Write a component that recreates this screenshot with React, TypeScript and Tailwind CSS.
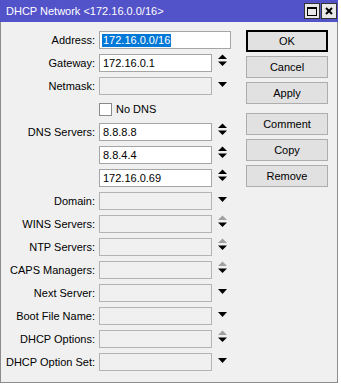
import React from "react";

type Kind = "spin" | "spinOff" | "drop" | "none";

const Arrow = ({ kind }: { kind: Kind }) => {
  if (kind === "none") return <div className="w-[9px]" />;
  if (kind === "drop")
    return (
      <svg width="9" height="18" viewBox="0 0 9 18" className="shrink-0">
        <polygon points="0,5 9,5 4.5,10" fill="#000" />
      </svg>
    );
  return (
    <svg width="9" height="18" viewBox="0 0 9 18" className="shrink-0">
      <polygon points="0,5 4.5,0.5 9,5" fill={kind === "spinOff" ? "#a0a0a0" : "#000"} />
      <polygon points="0,7.5 9,7.5 4.5,12" fill="#000" />
    </svg>
  );
};

const Field = ({ label, value, kind }: { label: string; value?: string; kind: Kind }) => {
  const disabled = value === undefined;
  return (
    <div className="flex items-center h-[18px]">
      <div className="w-[95px] text-right pr-[1px] leading-none">{label ? label + ":" : ""}</div>
      <div
        className={
          "ml-[3px] w-[113px] h-[18px] border flex items-center px-[3px] leading-none " +
          (disabled ? "bg-[#f0f0f0] border-[#b4b4b4]" : "bg-white border-[#a5a5a5]")
        }
      >
        {value}
      </div>
      <div className="ml-[6px]">
        <Arrow kind={kind} />
      </div>
    </div>
  );
};

const Btn = ({ label, focused }: { label: string; focused?: boolean }) => (
  <div
    className={
      "w-[82px] h-[22px] flex items-center justify-center bg-[#e1e1e1] leading-none " +
      (focused ? "border-2 border-black" : "border border-[#adadad]")
    }
  >
    {label}
  </div>
);

export default function App() {
  return (
    <div className="w-[341px] h-[384px] bg-white" style={{ fontFamily: '"Liberation Sans", Arial, sans-serif' }}>
      <div className="w-[338px] h-[383px] bg-[#f0f0f0] border border-[#8c8c8c] border-t-0 text-[11px] text-black flex flex-col">
        <div className="h-[22px] bg-[#5252c9] flex items-center justify-between pl-[6px] pr-[1px] -mx-px">
          <span className="text-white text-[11px]">DHCP Network &lt;172.16.0.0/16&gt;</span>
          <div className="flex gap-[1px]">
            <div className="w-[16px] h-[16px] bg-[#e8e8e8] border border-[#333] flex items-center justify-center">
              <div className="w-[10px] h-[9px] border border-black border-t-2" />
            </div>
            <div className="w-[16px] h-[16px] bg-[#e8e8e8] border border-[#333] flex items-center justify-center">
              <svg width="8" height="8" viewBox="0 0 8 8">
                <path d="M1 1 L7 7 M7 1 L1 7" stroke="#000" strokeWidth="2" />
              </svg>
            </div>
          </div>
        </div>
        <div className="flex">
          <div className="flex flex-col gap-[5px] pt-[9px]">
            <div className="flex items-center h-[18px]">
              <div className="w-[95px] text-right pr-[1px] leading-none">Address:</div>
              <div className="ml-[3px] w-[132px] h-[18px] bg-white border border-[#a5a5a5] flex items-center px-[2px] leading-none">
                <span className="bg-[#0078d7] text-white px-[1px] py-[1px]">172.16.0.0/16</span>
              </div>
            </div>
            <Field label="Gateway" value="172.16.0.1" kind="spin" />
            <Field label="Netmask" kind="drop" />
            <div className="flex items-center h-[18px]">
              <div className="ml-[98px] w-[13px] h-[13px] bg-white border border-[#8a8a8a]" />
              <span className="ml-[4px] leading-none">No DNS</span>
            </div>
            <Field label="DNS Servers" value="8.8.8.8" kind="spin" />
            <Field label="" value="8.8.4.4" kind="spin" />
            <Field label="" value="172.16.0.69" kind="spin" />
            <Field label="Domain" kind="drop" />
            <Field label="WINS Servers" kind="spinOff" />
            <Field label="NTP Servers" kind="spinOff" />
            <Field label="CAPS Managers" kind="spinOff" />
            <Field label="Next Server" kind="drop" />
            <Field label="Boot File Name" kind="drop" />
            <Field label="DHCP Options" kind="spinOff" />
            <Field label="DHCP Option Set" kind="drop" />
          </div>
          <div className="ml-[15px] pt-[8px] flex flex-col">
            <div className="flex flex-col gap-[4px]">
              <Btn label="OK" focused />
              <Btn label="Cancel" />
              <Btn label="Apply" />
            </div>
            <div className="flex flex-col gap-[4px] mt-[9px]">
              <Btn label="Comment" />
              <Btn label="Copy" />
              <Btn label="Remove" />
            </div>
          </div>
        </div>
      </div>
    </div>
  );
}
